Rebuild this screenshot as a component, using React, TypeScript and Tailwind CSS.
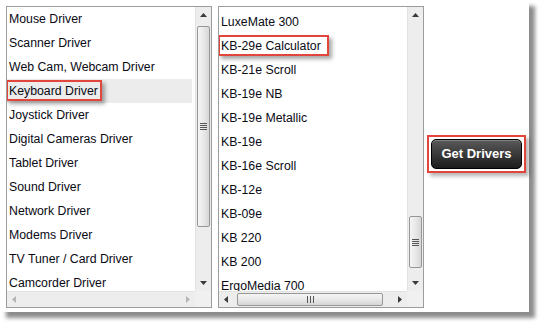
import React from "react"

const drivers = [
  "Mouse Driver",
  "Scanner Driver",
  "Web Cam, Webcam Driver",
  "Keyboard Driver",
  "Joystick Driver",
  "Digital Cameras Driver",
  "Tablet Driver",
  "Sound Driver",
  "Network Driver",
  "Modems Driver",
  "TV Tuner / Card Driver",
  "Camcorder Driver",
]

const models = [
  "LuxeMate 300",
  "KB-29e Calculator",
  "KB-21e Scroll",
  "KB-19e NB",
  "KB-19e Metallic",
  "KB-19e",
  "KB-16e Scroll",
  "KB-12e",
  "KB-09e",
  "KB 220",
  "KB 200",
  "ErgoMedia 700",
]

function Arrow({ dir, dim }: { dir: "up" | "down" | "left" | "right"; dim?: boolean }) {
  const pts = {
    up: "0,4 7,4 3.5,0",
    down: "0,0 7,0 3.5,4",
    left: "4,0 4,7 0,3.5",
    right: "0,0 0,7 4,3.5",
  }[dir]
  const vert = dir === "up" || dir === "down"
  return (
    <svg width={vert ? 7 : 4} height={vert ? 4 : 7} viewBox={vert ? "0 0 7 4" : "0 0 4 7"}>
      <polygon points={pts} fill={dim ? "#b4b4b4" : "#3a3a3a"} />
    </svg>
  )
}

function Grip({ vertical }: { vertical: boolean }) {
  return vertical ? (
    <div className="flex flex-col gap-[1px]">
      <div className="w-[7px] h-[1px] bg-[#555]" />
      <div className="w-[7px] h-[1px] bg-[#555]" />
      <div className="w-[7px] h-[1px] bg-[#555]" />
      <div className="w-[7px] h-[1px] bg-[#555]" />
    </div>
  ) : (
    <div className="flex flex-row gap-[2px]">
      <div className="w-[1px] h-[7px] bg-[#555]" />
      <div className="w-[1px] h-[7px] bg-[#555]" />
      <div className="w-[1px] h-[7px] bg-[#555]" />
    </div>
  )
}

function ListBox({
  items,
  offset,
  marked,
  highlightRow,
  markWidth,
  vThumb,
  hThumb,
}: {
  items: string[]
  offset: string
  marked: number
  highlightRow: boolean
  markWidth: string
  vThumb: { top: string; height: string }
  hThumb: { left: string; width: string } | null
}) {
  return (
    <div className="w-[206px] h-[302px] border border-[#9c9c9c] bg-white flex flex-col shrink-0">
      <div className="flex flex-row h-[284px]">
        <div className={`w-[188px] h-[284px] overflow-hidden ${offset}`}>
          {items.map((item, i) => (
            <div
              key={item}
              className={`relative h-[24px] flex items-center pl-[2px] text-[12.3px] text-[#0a0a14] whitespace-nowrap ${
                highlightRow && i === marked ? "bg-[#ececec] w-[185px]" : ""
              }`}
            >
              <span className="relative z-10">{item}</span>
              {i === marked ? (
                <div
                  className={`absolute left-[-1px] top-[1px] h-[21px] ${markWidth} border-2 border-[#e2453c] shadow-[3px_3px_4px_rgba(0,0,0,0.35)]`}
                />
              ) : null}
            </div>
          ))}
        </div>
        <div className="relative w-[16px] h-[284px] bg-[#ededed] border-l border-[#e2e2e2]">
          <div className="h-[16px] flex items-center justify-center">
            <Arrow dir="up" />
          </div>
          <div
            className={`absolute left-[1px] w-[13px] ${vThumb.top} ${vThumb.height} rounded-[2px] border border-[#979797] bg-gradient-to-r from-[#f5f5f5] via-[#e8e8e8] to-[#d6d6d6] flex items-center justify-center`}
          >
            <Grip vertical />
          </div>
          <div className="absolute bottom-0 left-0 w-[15px] h-[16px] flex items-center justify-center">
            <Arrow dir="down" />
          </div>
        </div>
      </div>
      <div className="flex flex-row h-[16px]">
        <div className="relative w-[188px] h-[16px] bg-[#ededed] border-t border-[#e2e2e2] flex items-center justify-between px-[5px]">
          <Arrow dir="left" dim={!hThumb} />
          {hThumb ? (
            <div
              className={`absolute top-[1px] ${hThumb.left} ${hThumb.width} h-[13px] rounded-[2px] border border-[#979797] bg-gradient-to-b from-[#f5f5f5] via-[#e8e8e8] to-[#d6d6d6] flex items-center justify-center`}
            >
              <Grip vertical={false} />
            </div>
          ) : null}
          <Arrow dir="right" dim={!hThumb} />
        </div>
        <div className="w-[16px] h-[16px] bg-[#f0f0f0]" />
      </div>
    </div>
  )
}

export default function App() {
  return (
    <div className="w-[544px] h-[327px] bg-white font-['Liberation_Sans',Arial,sans-serif]">
      <div className="w-[529px] h-[312px] bg-white shadow-[6px_6px_4px_rgba(0,0,0,0.45)] flex flex-row items-start pt-[6px] pl-[6px]">
        <ListBox
          items={drivers}
          offset="pt-0"
          marked={3}
          highlightRow
          markWidth="w-[96px]"
          vThumb={{ top: "top-[19px]", height: "h-[201px]" }}
          hThumb={null}
        />
        <div className="w-[6px] shrink-0" />
        <ListBox
          items={models}
          offset="pt-[3px]"
          marked={1}
          highlightRow={false}
          markWidth="w-[111px]"
          vThumb={{ top: "top-[209px]", height: "h-[52px]" }}
          hThumb={{ left: "left-[18px]", width: "w-[146px]" }}
        />
        <div className="h-[302px] flex items-center ml-[3px]">
          <div className="border-2 border-[#e2453c] p-[2px] -mt-[7px] shadow-[3px_3px_4px_rgba(0,0,0,0.3)]">
            <button className="w-[91px] h-[30px] rounded-[5px] border border-black bg-gradient-to-b from-[#5a5a5a] via-[#3a3a3a] to-[#1c1c1c] text-white font-bold text-[13px] shadow-[inset_0_1px_0_rgba(255,255,255,0.25)]">
              Get Drivers
            </button>
          </div>
        </div>
      </div>
    </div>
  )
}
